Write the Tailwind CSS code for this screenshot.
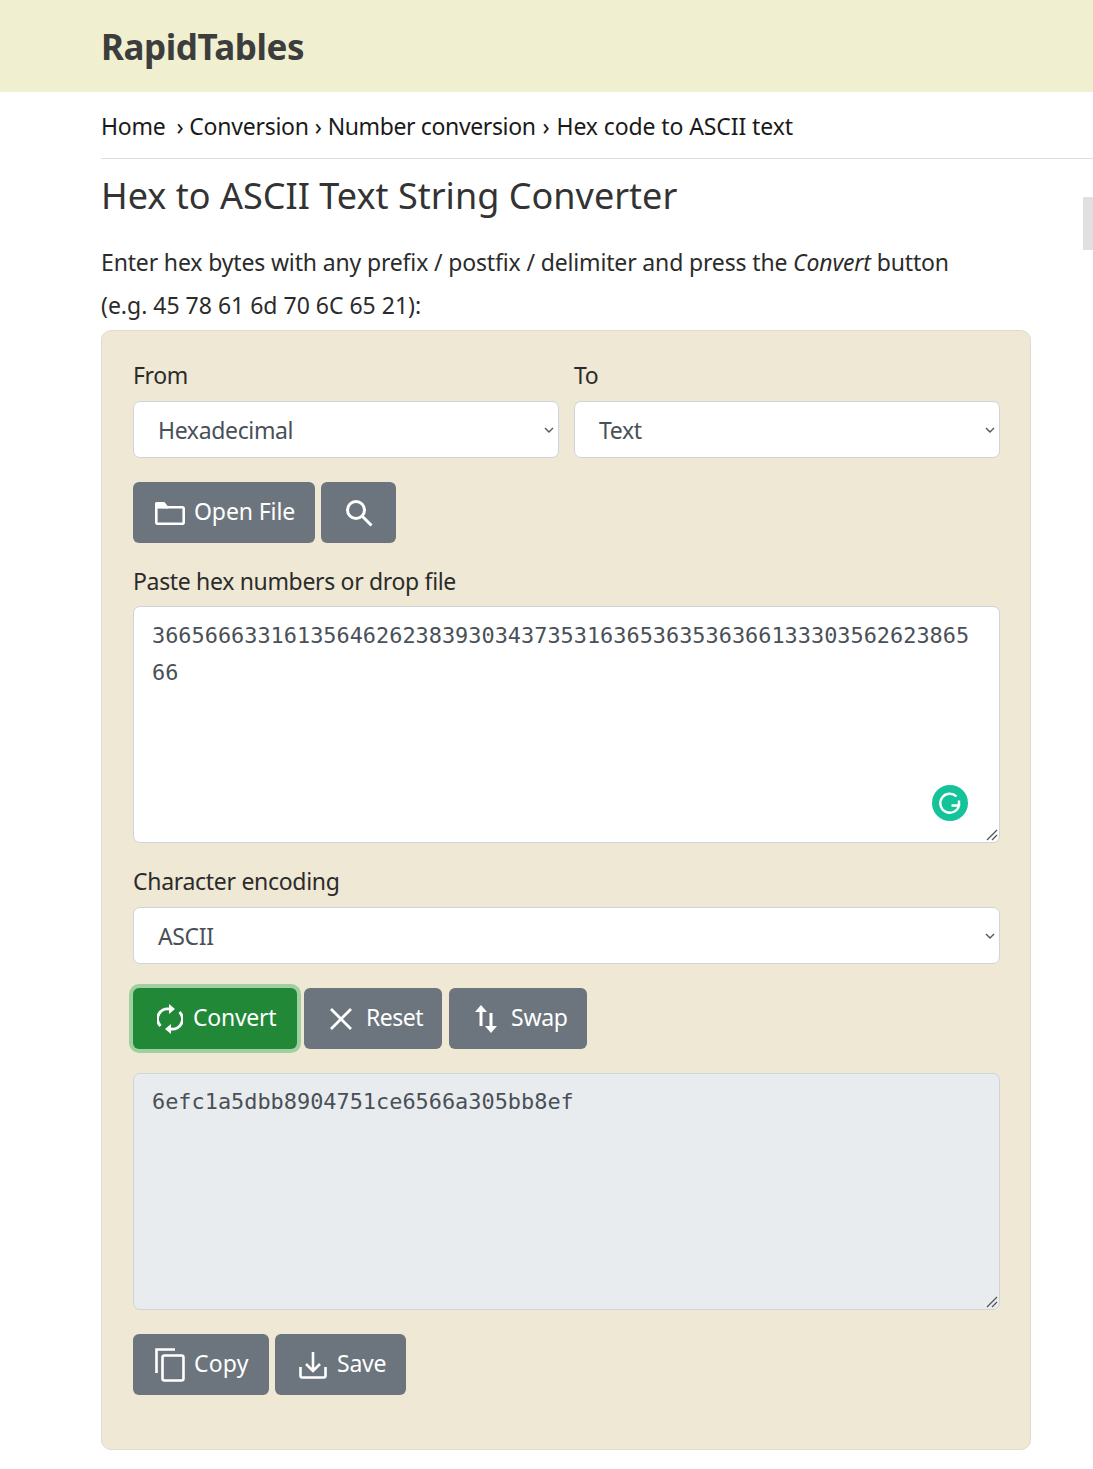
<!DOCTYPE html>
<html>
<head>
<meta charset="utf-8">
<script src="https://cdn.jsdelivr.net/npm/@tailwindcss/browser@4"></script>
</head>
<body class="bg-white font-['Noto_Sans',sans-serif] text-[#2b2b2b] overflow-hidden h-[1469px] relative">
<header class="h-[92px] bg-[#f0f0d0] pl-[101px] flex items-center">
  <span class="text-[35px] font-bold text-[#3d3d3d] tracking-[-0.45px] leading-none">RapidTables</span>
</header>
<div class="ml-[101px]">
  <nav class="h-[67px] border-b border-[#dedede] pt-[19px] text-[23px] leading-[30px] text-[#1a1a1a] flex tracking-[-0.25px]">
    <span>Home</span><span class="ml-[11px]">›</span><span class="ml-[6px]">Conversion</span><span class="ml-[6px]">›</span><span class="ml-[6px] tracking-[-0.37px]">Number conversion</span><span class="ml-[7px]">›</span><span class="ml-[7px] tracking-[-0.1px]">Hex code to ASCII text</span>
  </nav>
  <h1 class="text-[36px] leading-[44px] text-[#333] mt-[15px] tracking-[0.02px]">Hex to ASCII Text String Converter</h1>
  <p class="mt-[23px] text-[23px] leading-[43px] text-[#2b2b2b]"><span class="tracking-[-0.15px]">Enter hex bytes with any prefix / postfix / delimiter and press the <i>Convert</i> button</span><br><span class="tracking-[0px]">(e.g. 45 78 61 6d 70 6C 65 21):</span></p>
  <div class="mt-[3px] w-[930px] h-[1120px] bg-[#eee8d5] border border-[#dfdccf] rounded-[10px] pl-[31px] pr-[30px] pt-[24px]">
    <div class="flex gap-[15px]">
      <div class="w-[426px]">
        <label class="block text-[23px] leading-[40px] tracking-[-0.35px]">From</label>
        <div class="mt-[6px] h-[57px] bg-white border border-[#ced4da] rounded-[7px] pl-[24px] flex items-center justify-between pr-[4px] text-[23px] text-[#495057] tracking-[-0.35px]"><span class="pt-[2px]">Hexadecimal</span><svg width="10" height="6" viewBox="0 0 10 6" fill="none" stroke="#555" stroke-width="1.4"><path d="M1 1l4 4 4-4"/></svg></div>
      </div>
      <div class="w-[426px]">
        <label class="block text-[23px] leading-[40px] tracking-[-0.35px]">To</label>
        <div class="mt-[6px] h-[57px] bg-white border border-[#ced4da] rounded-[7px] pl-[24px] flex items-center justify-between pr-[4px] text-[23px] text-[#495057] tracking-[-0.35px]"><span class="pt-[2px]">Text</span><svg width="10" height="6" viewBox="0 0 10 6" fill="none" stroke="#555" stroke-width="1.4"><path d="M1 1l4 4 4-4"/></svg></div>
      </div>
    </div>
    <div class="flex gap-[6px] mt-[24px]">
      <button class="w-[182px] h-[61px] bg-[#6c757d] rounded-[6px] text-white text-[23px] tracking-[-0.1px] flex items-center pl-[22px] gap-[9px] pb-[2px]">
        <svg width="30" height="24" viewBox="0 0 30 24" fill="none" stroke="white" stroke-width="2.6" class="mt-[3px]"><rect x="1.300" y="6.300" width="27.400" height="16.400" rx="1.500"/><path d="M0 7V2.500A1.500 1.500 0 0 1 1.500 1h8l3.500 4.500v2z" fill="white" stroke="none"/></svg>
        Open File</button>
      <button class="w-[75px] h-[61px] bg-[#6c757d] rounded-[6px] flex items-center justify-center">
        <svg width="28" height="28" viewBox="0 0 28 28" fill="none" stroke="white" stroke-width="3"><circle cx="11" cy="11" r="8.500"/><path d="M17 17l9.500 9.500"/></svg></button>
    </div>
    <label class="block mt-[18px] text-[23px] leading-[40px] tracking-[-0.33px]">Paste hex numbers or drop file</label>
    <div class="relative mt-[5px] h-[237px] bg-white border border-[#ced4da] rounded-[7px] pl-[18px] pr-[24px] pt-[10px] font-['DejaVu_Sans_Mono',monospace] text-[21.9px] leading-[37px] text-[#495057] break-all">3665666331613564626238393034373531636536353636613330356262386566
      <svg class="absolute right-[31px] bottom-[21px]" width="36" height="36" viewBox="0 0 36 36"><circle cx="18" cy="18" r="18" fill="#15c39a"/><path d="M24.500 11.500A9.500 9.500 0 1 0 27 20.500h-7.500 M27 21v-5.500" fill="none" stroke="white" stroke-width="2.400"/></svg>
      <svg class="absolute right-[1px] bottom-[1px]" width="13" height="13" viewBox="0 0 13 13" stroke="#555" stroke-width="1.300"><path d="M2 12L12 2M7 12l5-5"/></svg>
    </div>
    <label class="block mt-[18px] text-[23px] leading-[40px] tracking-[-0.3px]">Character encoding</label>
    <div class="mt-[6px] h-[57px] bg-white border border-[#ced4da] rounded-[7px] pl-[24px] flex items-center justify-between pr-[4px] text-[23px] text-[#495057] tracking-[-0.35px]"><span class="pt-[2px]">ASCII</span><svg width="10" height="6" viewBox="0 0 10 6" fill="none" stroke="#555" stroke-width="1.4"><path d="M1 1l4 4 4-4"/></svg></div>
    <div class="flex mt-[24px]">
      <button class="w-[164px] h-[61px] bg-[#218838] rounded-[6px] ring-[4px] ring-[#a0d0a0] text-white text-[23px] tracking-[-0.25px] flex items-center pl-[24px] gap-[10px]">
        <svg width="26" height="32" viewBox="0 0 26 32" fill="none" stroke="white" stroke-width="3"><path d="M3.500 23A10 10 0 0 1 12 6M22.500 9a10 10 0 0 1-8.500 17"/><path d="M12 1l6 5-6 5zM14 21l-6 5 6 5z" fill="white" stroke="none"/></svg>
        <span class="pb-[2px]">Convert</span></button>
      <button class="ml-[7px] w-[138px] h-[61px] bg-[#6c757d] rounded-[6px] text-white text-[23px] tracking-[-0.5px] flex items-center pl-[26px] gap-[14px]">
        <svg width="22" height="22" viewBox="0 0 22 22" stroke="white" stroke-width="2.800"><path d="M1 1l20 20M21 1L1 21"/></svg>
        <span class="pb-[2px]">Reset</span></button>
      <button class="ml-[7px] w-[138px] h-[61px] bg-[#6c757d] rounded-[6px] text-white text-[23px] tracking-[-0.25px] flex items-center pl-[26px] gap-[14px]">
        <svg width="22" height="28" viewBox="0 0 22 28" fill="white"><path d="M6 0l6 7H7.500v14h-3V7H0zM16 28l-6-7h4.500V8h3v13H22z"/></svg>
        <span class="pb-[2px]">Swap</span></button>
    </div>
    <div class="relative mt-[24px] h-[237px] bg-[#e9ecef] border border-[#ced4da] rounded-[7px] pl-[18px] pt-[9px] font-['DejaVu_Sans_Mono',monospace] text-[21.9px] leading-[37px] text-[#495057]">6efc1a5dbb8904751ce6566a305bb8ef
      <svg class="absolute right-[1px] bottom-[1px]" width="13" height="13" viewBox="0 0 13 13" stroke="#555" stroke-width="1.300"><path d="M2 12L12 2M7 12l5-5"/></svg>
    </div>
    <div class="flex gap-[6px] mt-[24px]">
      <button class="w-[136px] h-[61px] bg-[#6c757d] rounded-[6px] text-white text-[23px] tracking-[0.2px] flex items-center pl-[22px] gap-[9px]">
        <svg width="30" height="34" viewBox="0 0 30 34" fill="none" stroke="white" stroke-width="2.600"><path d="M1.500 25V1.500H20"/><rect x="7.500" y="7.500" width="21" height="25" rx="2"/></svg>
        <span class="pb-[2px]">Copy</span></button>
      <button class="w-[131px] h-[61px] bg-[#6c757d] rounded-[6px] text-white text-[23px] tracking-[-0.25px] flex items-center pl-[24px] gap-[10px]">
        <svg width="28" height="28" viewBox="0 0 28 28" fill="none" stroke="white" stroke-width="2.600"><path d="M14 1v18M7 13l7 7 7-7M1.500 16v9a1.500 1.500 0 0 0 1.500 1.500h22a1.500 1.500 0 0 0 1.500-1.500v-9"/></svg>
        <span class="pb-[2px]">Save</span></button>
    </div>
  </div>
</div>
<div class="absolute top-[197px] right-0 w-[10px] h-[53px] bg-[#e0e0e0]"></div>
</body>
</html>
